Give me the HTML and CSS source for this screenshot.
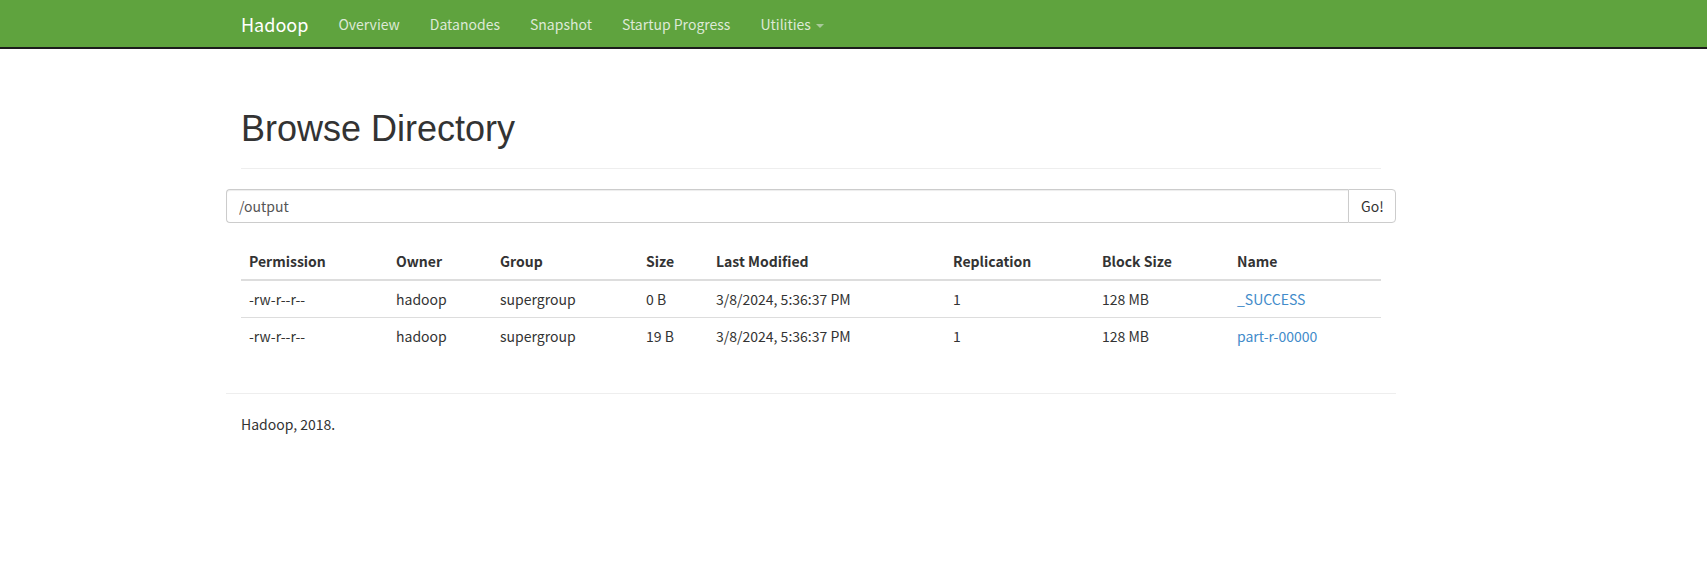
FILE: index.html
```html
<!DOCTYPE html>
<html lang="en">
<head>
<meta charset="utf-8">
<title>Browsing HDFS</title>
<link rel="stylesheet" href="styles.css">
</head>
<body>
<header class="navbar">
  <div class="container nav-inner">
    <a class="brand" href="#">Hadoop</a>
    <ul class="nav">
      <li><a href="#">Overview</a></li>
      <li><a href="#">Datanodes</a></li>
      <li><a href="#">Snapshot</a></li>
      <li><a href="#">Startup Progress</a></li>
      <li><a href="#">Utilities <span class="caret"></span></a></li>
    </ul>
  </div>
</header>

<div class="container">
  <div class="page-header">
    <h1>Browse Directory</h1>
  </div>

  <form class="input-group">
    <input class="form-control" type="text" value="/output">
    <button class="btn" type="button">Go!</button>
  </form>

  <table class="table">
    <thead>
      <tr>
        <th>Permission</th><th>Owner</th><th>Group</th><th>Size</th><th>Last Modified</th><th>Replication</th><th>Block Size</th><th>Name</th>
      </tr>
    </thead>
    <tbody>
      <tr>
        <td>-rw-r--r--</td><td>hadoop</td><td>supergroup</td><td>0 B</td><td>3/8/2024, 5:36:37 PM</td><td>1</td><td>128 MB</td><td><a href="#">_SUCCESS</a></td>
      </tr>
      <tr>
        <td>-rw-r--r--</td><td>hadoop</td><td>supergroup</td><td>19 B</td><td>3/8/2024, 5:36:37 PM</td><td>1</td><td>128 MB</td><td><a href="#">part-r-00000</a></td>
      </tr>
    </tbody>
  </table>

  <hr class="footer-rule">
  <footer class="footer">
    <p>Hadoop, 2018.</p>
  </footer>
</div>
</body>
</html>
```

FILE: styles.css
```css
* { box-sizing: border-box; }

html, body {
  margin: 0;
  padding: 0;
  background: #fff;
}

body {
  font-family: "Noto Sans CJK SC", "Noto Sans", sans-serif;
  font-size: 14px;
  line-height: 20px;
  color: #333;
}

a { color: #428bca; text-decoration: none; }

.container {
  width: 1170px;
  margin-left: 226px;
  padding: 0 15px;
}

/* Navbar */
.navbar {
  background: #5fa33e;
  border-bottom: 2px solid #1c1c1c;
  height: 49px;
}

.nav-inner {
  display: flex;
  align-items: center;
  height: 47px;
}

.brand {
  color: #fff;
  font-size: 18px;
  line-height: 20px;
  padding: 0 15px;
  margin-left: -15px;
}

.nav {
  display: flex;
  list-style: none;
  margin: 0;
  padding: 0;
}

.nav a {
  display: block;
  color: #dde9d6;
  font-size: 14px;
  line-height: 20px;
  padding: 0 15px;
}

.caret {
  display: inline-block;
  width: 0;
  height: 0;
  margin-left: 2px;
  vertical-align: middle;
  border-top: 4px solid #a9c99a;
  border-left: 4px solid transparent;
  border-right: 4px solid transparent;
}

/* Header */
.page-header {
  margin: 60px 0 20px;
  padding-bottom: 9px;
  border-bottom: 1px solid #eee;
}

.page-header h1 {
  margin: 0 0 10px;
  font-family: "Liberation Sans", Arial, sans-serif;
  font-size: 36px;
  font-weight: 500;
  line-height: 1.1;
  color: #333;
}

/* Input group */
.input-group {
  display: flex;
  margin: 0 -15px;
}

.form-control {
  flex: 1;
  height: 34px;
  padding: 6px 12px;
  font-family: inherit;
  font-size: 14px;
  line-height: 20px;
  color: #555;
  background: #fff;
  border: 1px solid #ccc;
  border-right: 0;
  border-radius: 4px 0 0 4px;
  box-shadow: inset 0 1px 1px rgba(0,0,0,.075);
  outline: none;
}

.btn {
  width: 48px;
  height: 34px;
  padding: 6px 12px;
  font-family: inherit;
  font-size: 14px;
  line-height: 20px;
  color: #333;
  background: #fff;
  border: 1px solid #ccc;
  border-radius: 0 4px 4px 0;
}

/* Table */
.table {
  width: 100%;
  table-layout: fixed;
  border-collapse: collapse;
  border-spacing: 0;
  margin: 20px 0 39px;
}

.table th,
.table td {
  padding: 8px;
  text-align: left;
  vertical-align: top;
  line-height: 20px;
  white-space: nowrap;
}

.table th {
  font-weight: bold;
  border-bottom: 2px solid #ddd;
}

.table td { border-top: 1px solid #ddd; }

.table th:nth-child(1) { width: 147px; }
.table th:nth-child(2) { width: 104px; }
.table th:nth-child(3) { width: 146px; }
.table th:nth-child(4) { width: 70px; }
.table th:nth-child(5) { width: 237px; }
.table th:nth-child(6) { width: 149px; }
.table th:nth-child(7) { width: 135px; }
.table th:nth-child(8) { width: 152px; }

/* Footer */
.footer-rule {
  margin: 20px -15px;
  border: 0;
  border-top: 1px solid #eee;
}

.footer p { margin: 0; }
```
